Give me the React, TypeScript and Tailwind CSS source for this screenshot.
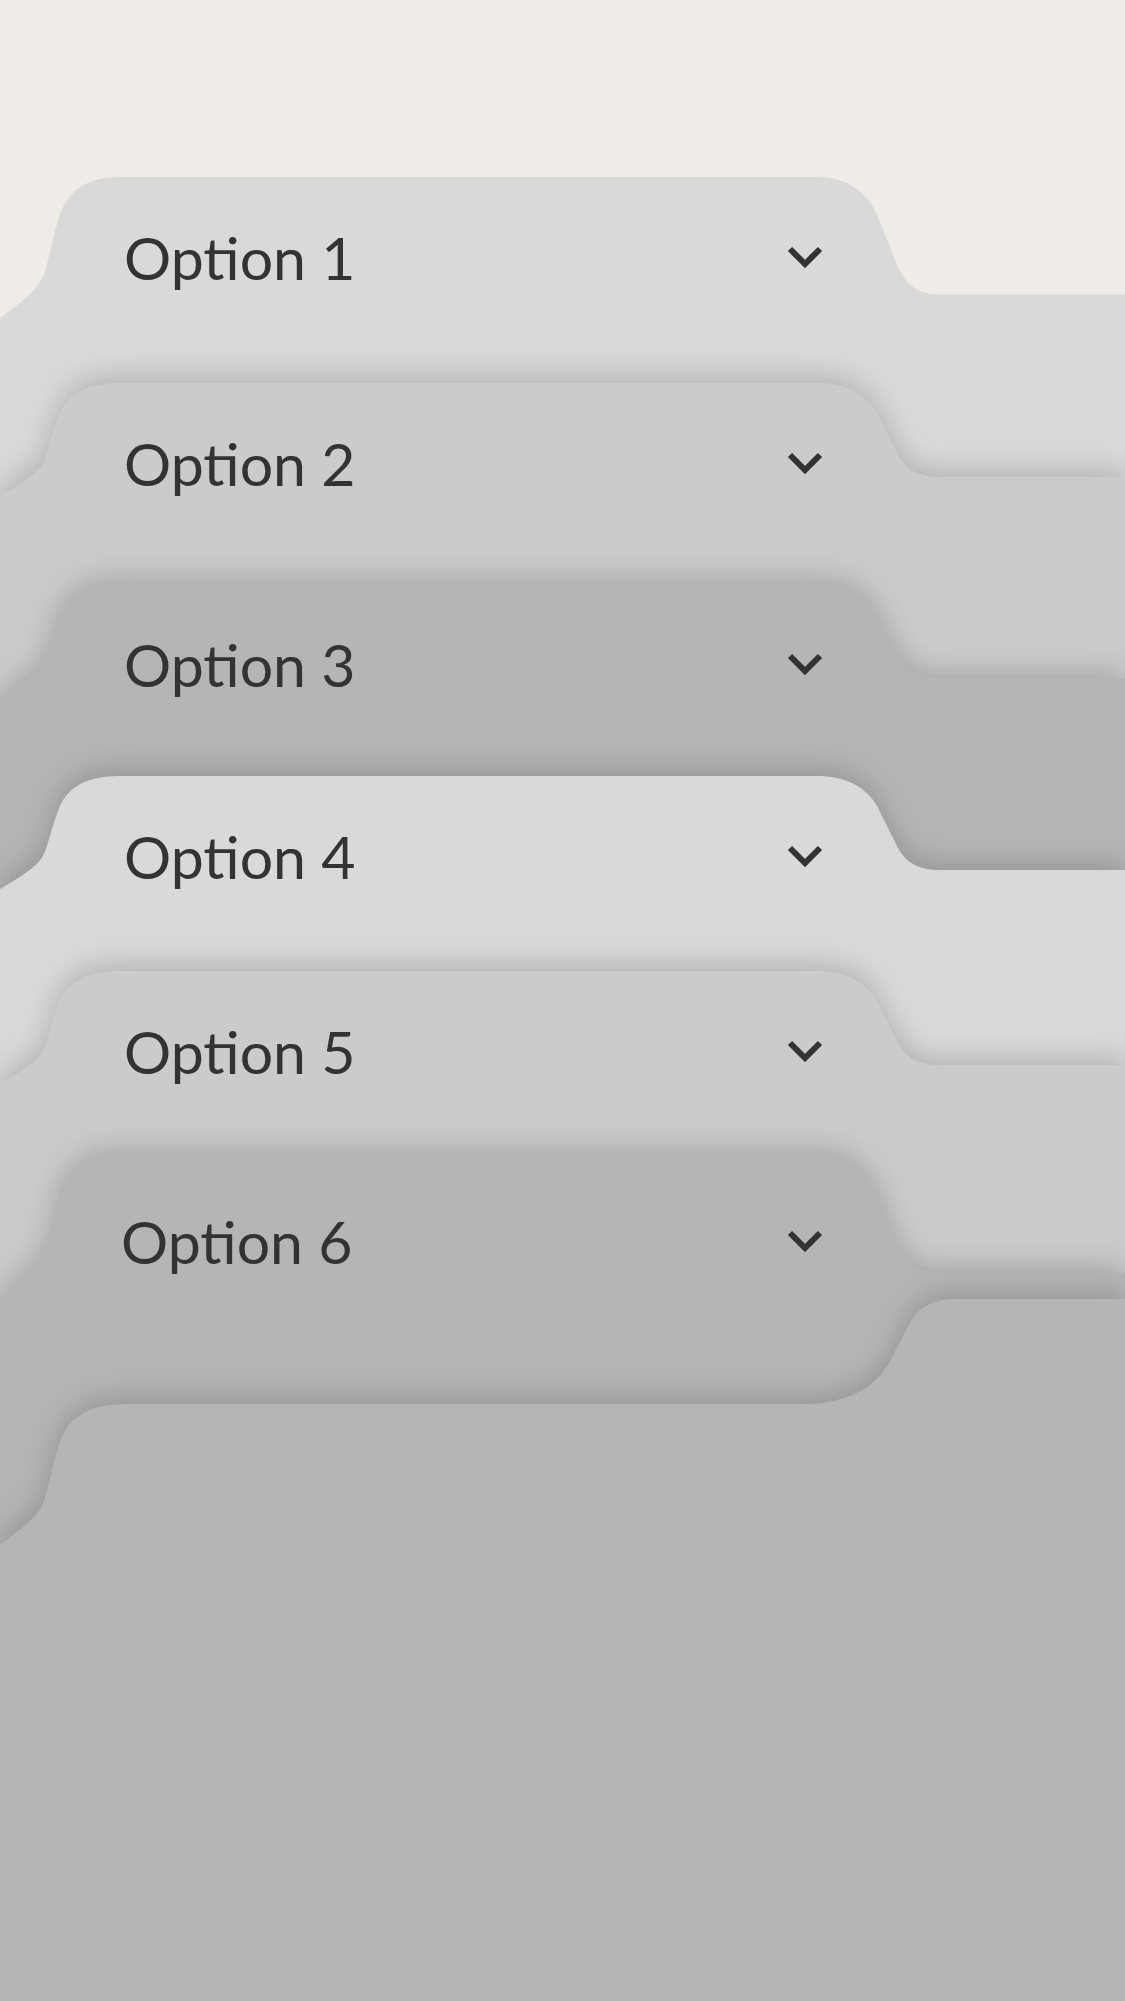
import React from 'react';

type Item = {
  label: string;
  fill: string;
  scale: number;
  shadow: boolean;
  box: string;
  row: string;
  text: string;
};

const items: Item[] = [
  { label: 'Option 1', fill: '#d9d9d9', scale: 1.25, shadow: false, box: 'h-[206px]', row: 'h-[160px] pl-[124px]', text: 'w-[663px]' },
  { label: 'Option 2', fill: '#cbcbcb', scale: 1, shadow: true, box: 'h-[201px]', row: 'h-[160px] pl-[124px]', text: 'w-[663px]' },
  { label: 'Option 3', fill: '#b5b5b5', scale: 1, shadow: true, box: 'h-[192px]', row: 'h-[160px] pl-[124px]', text: 'w-[663px]' },
  { label: 'Option 4', fill: '#d9d9d9', scale: 1, shadow: true, box: 'h-[195px]', row: 'h-[160px] pl-[124px]', text: 'w-[663px]' },
  { label: 'Option 5', fill: '#cbcbcb', scale: 1, shadow: true, box: 'h-[184px]', row: 'h-[160px] pl-[124px]', text: 'w-[663px]' },
  { label: 'Option 6', fill: '#b5b5b5', scale: 1.25, shadow: true, box: 'h-[144px]', row: 'h-[172px] pl-[121px]', text: 'w-[666px]' },
];

// folder-tab outline, tab top at y=0, body runs down to `bottom`
const tabPath = (s: number, bottom: number) =>
  [
    `M0 ${113 * s}`,
    `C18 ${102 * s} 36 ${92 * s} 43 ${80 * s}`,
    `C48 ${70 * s} 52 ${50 * s} 58 ${35 * s}`,
    `C66 ${12 * s} 85 0 120 0`,
    'L817 0',
    `C845 0 865 ${10 * s} 877 ${30 * s}`,
    `L898 ${72 * s}`,
    `C907 ${88 * s} 920 ${94 * s} 940 ${94 * s}`,
    `L1125 ${94 * s}`,
    `L1125 ${bottom} L0 ${bottom} Z`,
  ].join(' ');

const footerPath = (bottom: number) =>
  [
    'M1125 0 L954 0',
    'C932 0 918 10 911 22',
    'L890 62',
    'C878 86 850 105 803 105',
    'L129 105',
    'C85 105 66 120 58 149',
    'C52 167 48 192 43 205',
    'C36 220 18 232 0 246',
    `L0 ${bottom} L1125 ${bottom} Z`,
  ].join(' ');

const Chevron: React.FC = () => (
  <svg width="36" height="22" viewBox="0 0 36 22" fill="none" className="shrink-0">
    <polyline points="3,3 18,18 33,3" stroke="#333333" strokeWidth="6" strokeLinecap="butt" strokeLinejoin="miter" />
  </svg>
);

const App: React.FC = () => {
  return (
    <div className="min-h-screen overflow-hidden bg-[#efebe7] pt-[177px] text-[#333333] [font-family:Lato,'Noto_Sans',sans-serif]">
      {items.map(item => (
        <div key={item.label} className={`relative z-0 ${item.box}`}>
          <svg
            width="1125"
            height="720"
            viewBox="0 0 1125 720"
            className={`absolute left-0 top-0 ${item.shadow ? '[filter:drop-shadow(0_-6px_14px_rgba(0,0,0,0.18))]' : ''}`}
          >
            <path d={tabPath(item.scale, 720)} fill={item.fill} />
          </svg>
          <div className={`relative flex items-center ${item.row}`}>
            <span className={`${item.text} text-[59px] leading-none`}>{item.label}</span>
            <Chevron />
          </div>
        </div>
      ))}

      {/* bottom sheet */}
      <div className="relative z-0 h-[702px]">
        <svg
          width="1125"
          height="702"
          viewBox="0 0 1125 702"
          className="absolute left-0 top-0 [filter:drop-shadow(0_-6px_14px_rgba(0,0,0,0.18))]"
        >
          <path d={footerPath(702)} fill="#b5b5b5" />
        </svg>
      </div>
    </div>
  );
};

export default App;
